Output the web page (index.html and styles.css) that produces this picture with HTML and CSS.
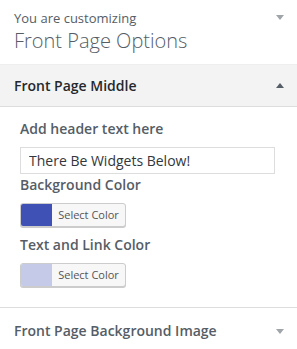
FILE: index.html
```html
<!DOCTYPE html>
<html lang="en">
<head>
    <meta charset="UTF-8">
    <title>Front Page Options</title>
    <link rel="stylesheet" href="styles.css">
</head>
<body>
    <div class="panel-head">
        <div class="head-text">
            <span class="action">You are customizing</span>
            <h2 class="panel-title">Front Page Options</h2>
        </div>
        <span class="arrow down"></span>
    </div>

    <div class="section open">
        <h3 class="section-title">Front Page Middle</h3>
        <span class="arrow up"></span>
    </div>

    <div class="section-body">
        <label class="control-label">Add header text here</label>
        <input type="text" class="text-input" value="There Be Widgets Below!">

        <label class="control-label">Background Color</label>
        <button class="color-btn"><span class="swatch swatch-blue"></span><span class="btn-text">Select Color</span></button>

        <label class="control-label">Text and Link Color</label>
        <button class="color-btn"><span class="swatch swatch-light"></span><span class="btn-text">Select Color</span></button>
    </div>

    <div class="section">
        <h3 class="section-title muted">Front Page Background Image</h3>
        <span class="arrow down"></span>
    </div>
</body>
</html>
```

FILE: styles.css
```css
* {
    margin: 0;
    padding: 0;
    box-sizing: border-box;
    font-family: 'Open Sans', 'Noto Sans', sans-serif;
}

body {
    background: #fff;
    color: #555d66;
    width: 297px;
    height: 349px;
    overflow: hidden;
}

.panel-head {
    display: flex;
    justify-content: space-between;
    align-items: flex-start;
    height: 65px;
    padding: 9px 13px 0 14px;
    border-bottom: 1px solid #eee;
}

.action {
    display: block;
    font-size: 13px;
    line-height: 18px;
}

.panel-title {
    font-size: 20px;
    font-weight: 300;
    line-height: 28px;
}

.arrow {
    width: 0;
    height: 0;
    border-left: 4px solid transparent;
    border-right: 4px solid transparent;
}

.arrow.down {
    border-top: 5px solid #a0a5aa;
    margin-top: 6px;
}

.arrow.up {
    border-bottom: 5px solid #555d66;
}

.section {
    display: flex;
    justify-content: space-between;
    align-items: center;
    height: 42px;
    padding: 0 13px 0 14px;
}

.section.open {
    background: #f3f3f3;
    border-bottom: 1px solid #ddd;
}

.section .arrow.down {
    margin-top: 2px;
}

.section-title {
    font-size: 14px;
    font-weight: 600;
    color: #23282d;
}

.section-title.muted {
    color: #555d66;
}

.section-body {
    display: flex;
    flex-direction: column;
    align-items: flex-start;
    padding: 12px 20px 12px;
    border-bottom: 1px solid #ddd;
    margin-bottom: 1px;
}

.control-label {
    font-size: 14px;
    font-weight: 600;
    line-height: 20px;
}

.text-input {
    width: 255px;
    height: 27px;
    margin: 8px 0 1px;
    padding: 0 8px;
    border: 1px solid #ddd;
    font-size: 14px;
    color: #32373c;
    background: #fff;
    outline: none;
}

.color-btn {
    display: flex;
    width: 106px;
    height: 24px;
    margin: 8px 0 8px;
    border: 1px solid #ccc;
    border-radius: 3px;
    background: #f7f7f7;
    box-shadow: 0 1px 0 #ccc;
    overflow: hidden;
    cursor: pointer;
}

.swatch {
    width: 31px;
    height: 100%;
}

.swatch-blue {
    background: #3f51b5;
}

.swatch-light {
    background: #c5cae9;
}

.btn-text {
    flex: 1;
    font-size: 11px;
    line-height: 22px;
    text-align: center;
    color: #555;
}
```
